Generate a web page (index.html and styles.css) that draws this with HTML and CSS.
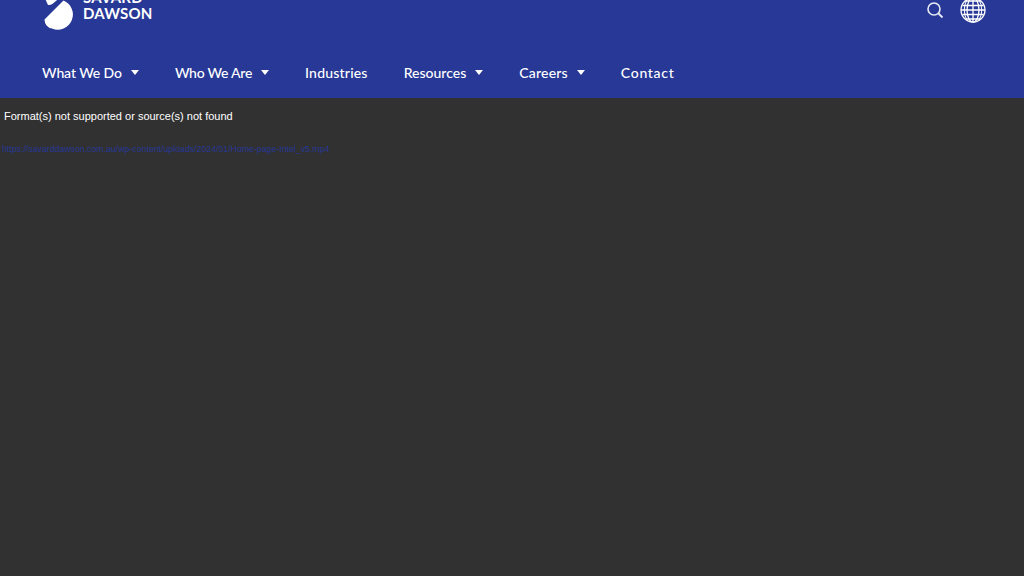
FILE: index.html
```html
<!DOCTYPE html>
<html lang="en">
<head>
<meta charset="utf-8">
<title>Savard Dawson</title>
<link rel="stylesheet" href="styles.css">
</head>
<body>
<header class="site-header">
  <div class="top-row">
    <a class="logo" href="#">
      <svg class="logo-mark" width="32" height="30" viewBox="0 0 32 30">
        <path d="M1 -6 L11 -6 L17.500 -2 L11 3.500 A7 7 0 0 1 6 5 Z" fill="#fff"/>
        <path d="M21.500 0.500 A14.500 14.500 0 0 1 10 28.500 A9 9 0 0 1 2.500 19.500 Z" fill="#fff"/>
      </svg>
      <span class="logo-text"><span class="logo-line">SAVARD</span><span class="logo-line">DAWSON</span></span>
    </a>
    <div class="tools">
      <svg class="icon-search" width="18" height="18" viewBox="0 0 18 18" fill="none" stroke="#e8eaf5">
        <circle cx="8" cy="8" r="6" stroke-width="1.600"/>
        <path d="M12.500 12.500 L16.500 16.500" stroke-width="1.800"/>
      </svg>
      <svg class="icon-globe" width="26" height="26" viewBox="0 0 26 26" fill="none" stroke="#fff" stroke-width="1.300">
        <circle cx="13" cy="13" r="12"/>
        <ellipse cx="13" cy="13" rx="6" ry="12"/>
        <path d="M13 1 V25 M1 13 H25 M2.500 8.500 H23.500 M2.500 17.500 H23.500 M5.500 4 H20.500 M5.500 22 H20.500"/>
        <path d="M7 2.500 Q1.500 13 7 23.500 M19 2.500 Q24.500 13 19 23.500" stroke-width="1"/>
      </svg>
    </div>
  </div>
  <nav class="main-nav">
    <a class="nav-item nav-what" href="#">What We Do<span class="caret"></span></a>
    <a class="nav-item nav-who" href="#">Who We Are<span class="caret"></span></a>
    <a class="nav-item nav-industries" href="#">Industries</a>
    <a class="nav-item nav-resources" href="#">Resources<span class="caret"></span></a>
    <a class="nav-item nav-careers" href="#">Careers<span class="caret"></span></a>
    <a class="nav-item nav-contact" href="#">Contact</a>
  </nav>
</header>
<main class="player">
  <p class="error">Format(s) not supported or source(s) not found</p>
  <a class="source" href="#">https://savarddawson.com.au/wp-content/uploads/2024/01/Home-page-Intel_v5.mp4</a>
</main>
</body>
</html>
```
FILE: styles.css
```css
* { box-sizing: border-box; }
html, body { margin: 0; height: 100%; }
body {
  display: flex;
  flex-direction: column;
  height: 576px;
  overflow: hidden;
  background: #313131;
  font-family: "Liberation Sans", Arial, sans-serif;
}
a { text-decoration: none; }
.site-header {
  flex: 0 0 98px;
  background: #273896;
  color: #fff;
  display: flex;
  flex-direction: column;
}
.top-row {
  flex: 0 0 48px;
  display: flex;
  justify-content: space-between;
  align-items: flex-start;
  padding: 0 38px 0 42px;
}
.logo {
  display: flex;
  color: #fff;
  height: 30px;
  overflow: hidden;
}
.logo-mark { display: block; }
.logo-text {
  display: flex;
  flex-direction: column;
  margin: -11px 0 0 9px;
  font-family: Lato, sans-serif;
  font-size: 15px;
  font-weight: 700;
  line-height: 16px;
  letter-spacing: 0.2px;
}
.tools {
  display: flex;
  align-items: flex-start;
  gap: 16px;
}
.icon-search { margin-top: 1px; }
.icon-globe { margin-top: -3px; }
.main-nav {
  display: flex;
  gap: 36px;
  padding-left: 42px;
}
.nav-item {
  display: flex;
  align-items: center;
  height: 48px;
  color: #fff;
  font-family: Lato, sans-serif;
  font-size: 14px;
  font-weight: 500;
  letter-spacing: 0.1px;
}
.nav-what { letter-spacing: -0.1px; }
.nav-who { letter-spacing: -0.25px; }
.nav-industries { letter-spacing: 0.2px; }
.nav-resources { letter-spacing: 0; }
.nav-careers { letter-spacing: 0.2px; }
.nav-contact { letter-spacing: 0.7px; }
.caret {
  width: 0;
  height: 0;
  margin: 0 0 0 9px;
  border-left: 4px solid transparent;
  border-right: 4px solid transparent;
  border-top: 5px solid #fff;
}
.player {
  flex: 1;
  padding: 12px 4px 0;
}
.error {
  margin: 0;
  color: #fff;
  font-size: 11px;
  line-height: 13px;
}
.source {
  display: block;
  margin: 20px 0 0 -2px;
  color: #273896;
  font-size: 8.750px;
  line-height: 12px;
}
```
